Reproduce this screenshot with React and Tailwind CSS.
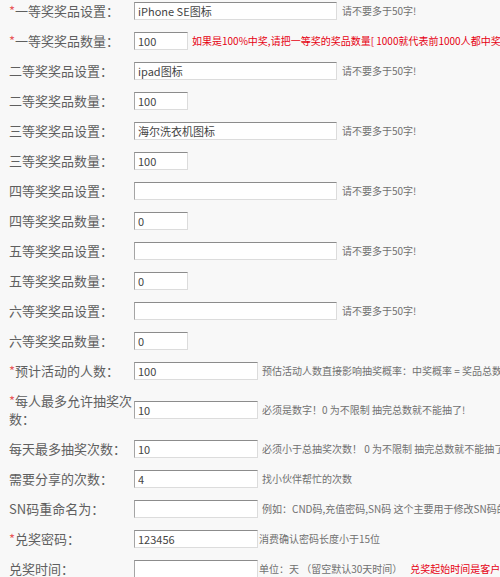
import React from "react";

const FONT = { fontFamily: '"Noto Sans CJK SC", "Noto Sans", sans-serif' };

function Field({ value, w }) {
  return (
    <input
      readOnly
      value={value}
      className={`${w} h-[18px] shrink-0 bg-white border border-t-[#8c8c8c] border-l-[#a5a5a5] border-r-[#dcdcdc] border-b-[#dcdcdc] pl-[3px] text-[11px] text-[#444] outline-none`}
      style={FONT}
    />
  );
}

function Row({ label, req, value, w, hint, hintRed, gap = "ml-[5px]", extraRed }) {
  return (
    <div className="flex items-center py-[6px]">
      <div className="w-[125px] shrink-0 text-[13px] leading-[18px] text-[#5f5f5f]">
        {req && <span className="text-[#e85a5a]">*</span>}
        {label}
      </div>
      <Field value={value} w={w} />
      {hint && (
        <span
          className={`${gap} whitespace-nowrap text-[10px] leading-[14px] ${hintRed ? "text-[#e60012]" : "text-[#707070]"}`}
        >
          {hint}
          {extraRed && <span className="ml-[8px] text-[#e60012]">{extraRed}</span>}
        </span>
      )}
    </div>
  );
}

const WIDE = "w-[203px]";
const SMALL = "w-[54px]";
const MID = "w-[124px]";
const LIMIT = "请不要多于50字!";

export default function App() {
  return (
    <div className="w-[500px] h-[577px] overflow-hidden bg-[#f8f8f8]" style={FONT}>
      <div className="-mt-[4px] pl-[9px]">
        <Row req label="一等奖奖品设置：" value="iPhone SE图标" w={WIDE} hint={LIMIT} />
        <Row
          req
          label="一等奖奖品数量："
          value="100"
          w={SMALL}
          hintRed
          gap="ml-[4px]"
          hint="如果是100%中奖,请把一等奖的奖品数量[ 1000就代表前1000人都中奖 ]设置为预计活动人数"
        />
        <Row label="二等奖奖品设置：" value="ipad图标" w={WIDE} hint={LIMIT} />
        <Row label="二等奖奖品数量：" value="100" w={SMALL} />
        <Row label="三等奖奖品设置：" value="海尔洗衣机图标" w={WIDE} hint={LIMIT} />
        <Row label="三等奖奖品数量：" value="100" w={SMALL} />
        <Row label="四等奖奖品设置：" value="" w={WIDE} hint={LIMIT} />
        <Row label="四等奖奖品数量：" value="0" w={SMALL} />
        <Row label="五等奖奖品设置：" value="" w={WIDE} hint={LIMIT} />
        <Row label="五等奖奖品数量：" value="0" w={SMALL} />
        <Row label="六等奖奖品设置：" value="" w={WIDE} hint={LIMIT} />
        <Row label="六等奖奖品数量：" value="0" w={SMALL} />
        <Row
          req
          label="预计活动的人数："
          value="100"
          w={MID}
          gap="ml-[4px]"
          hint="预估活动人数直接影响抽奖概率：中奖概率 = 奖品总数/(预估活动人数*每人抽奖次数)"
        />
        <Row
          req
          label="每人最多允许抽奖次数："
          value="10"
          w={MID}
          gap="ml-[4px]"
          hint="必须是数字！0 为不限制 抽完总数就不能抽了!"
        />
        <Row
          label="每天最多抽奖次数："
          value="10"
          w={MID}
          gap="ml-[4px]"
          hint="必须小于总抽奖次数！ 0 为不限制 抽完总数就不能抽了!"
        />
        <Row label="需要分享的次数：" value="4" w={MID} gap="ml-[4px]" hint="找小伙伴帮忙的次数" />
        <Row
          label="SN码重命名为："
          value=""
          w={MID}
          gap="ml-[4px]"
          hint="例如：CND码,充值密码,SN码 这个主要用于修改SN码的名称"
        />
        <Row req label="兑奖密码：" value="123456" w={MID} gap="ml-[1px]" hint="消费确认密码长度小于15位" />
        <Row
          label="兑奖时间："
          value=""
          w={MID}
          gap="ml-[1px]"
          hint="单位：天 （留空默认30天时间）"
          extraRed="兑奖起始时间是客户中奖的时间"
        />
      </div>
    </div>
  );
}
